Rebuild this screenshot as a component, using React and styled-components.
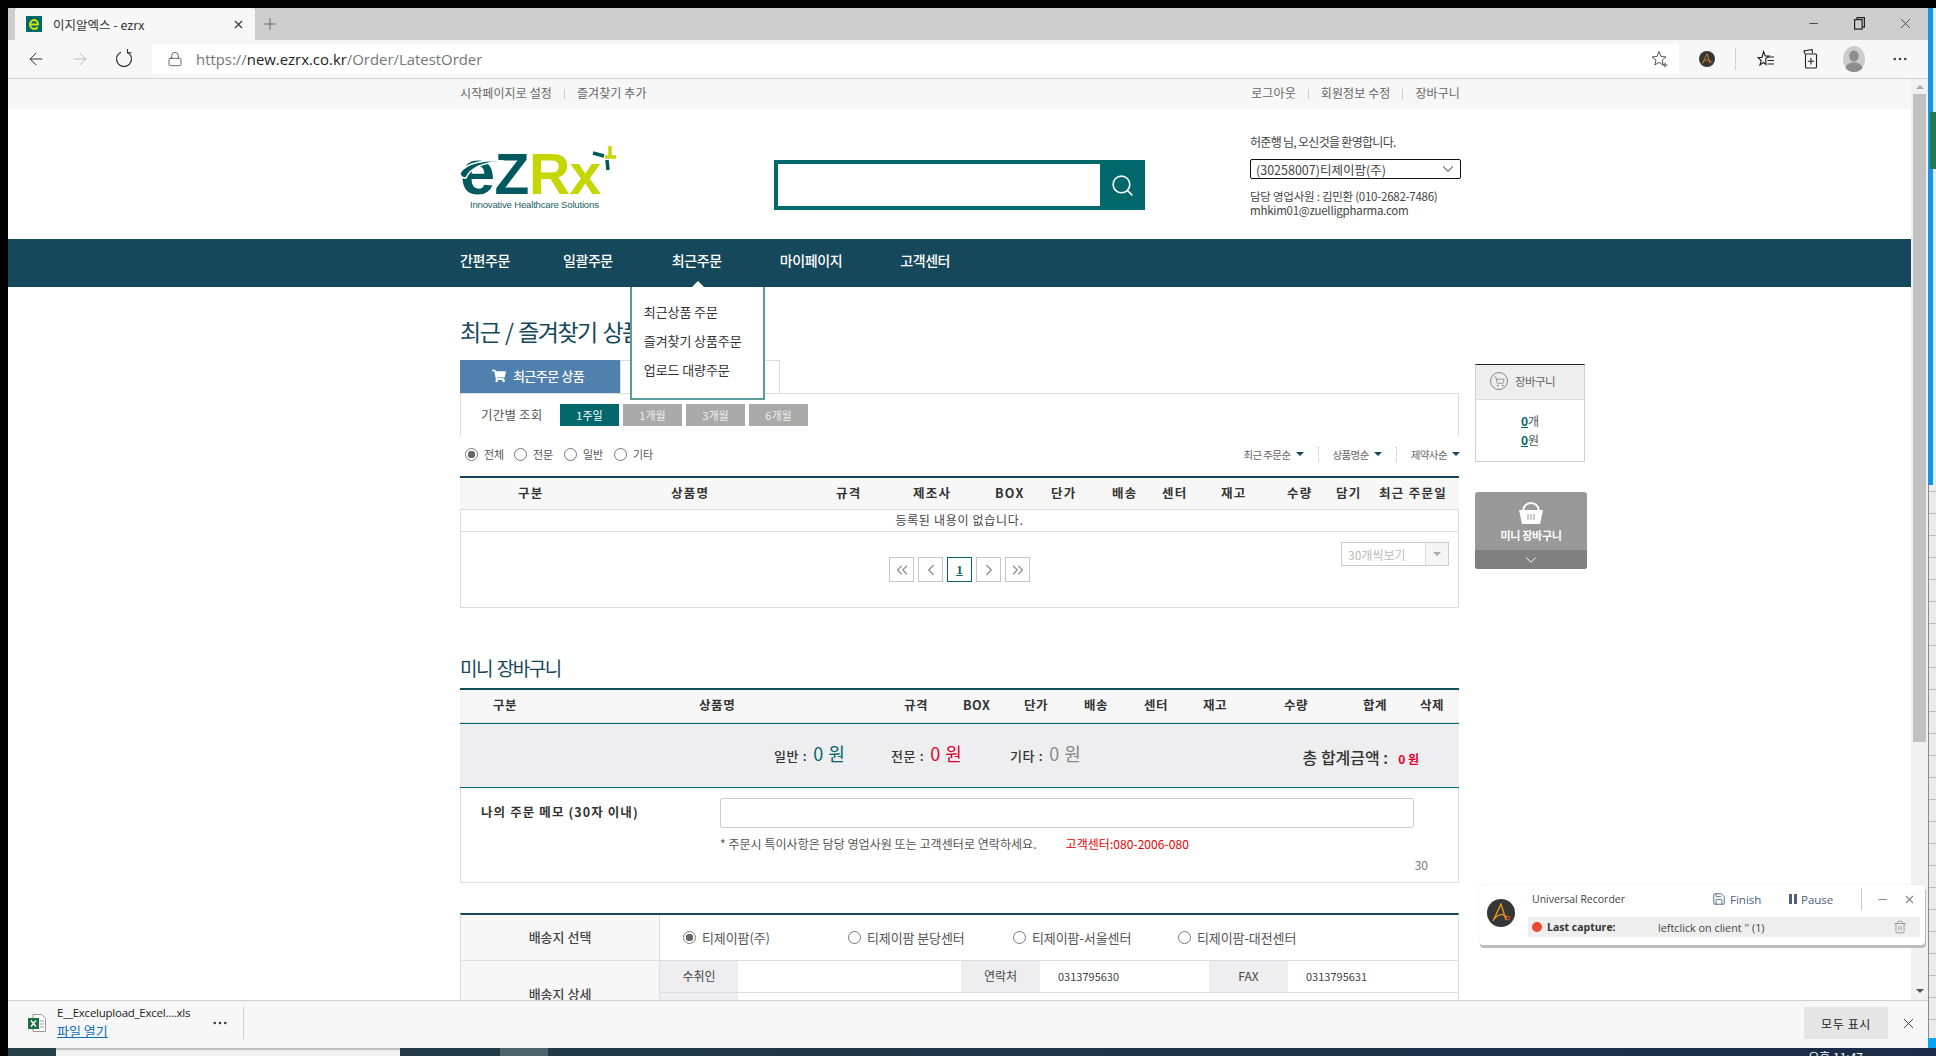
import React from 'react'
import styled, { createGlobalStyle } from 'styled-components'
import {
  ArrowLeft,
  ArrowRight,
  ChevronDown,
  ChevronLeft,
  ChevronRight,
  ChevronsLeft,
  ChevronsRight,
  Lock,
  Minus,
  MoreHorizontal,
  Plus,
  Save,
  Search,
  ShoppingCart,
  Trash2,
  X,
} from 'lucide-react'
import { FaShoppingCart } from 'react-icons/fa'

const KR = '"Noto Sans CJK KR", "Liberation Sans", sans-serif'
const UI = '"Open Sans", "Noto Sans CJK KR", sans-serif'
const TEAL = '#00686b'
const NAVY = '#15485a'
const LINE = '#dddddd'

const GlobalStyle = createGlobalStyle`
  html, body {
    margin: 0;
    padding: 0;
    background: #000;
    overflow: hidden;
  }
  * {
    box-sizing: border-box;
  }
`

const Screen = styled.div`
  width: 1936px;
  height: 1056px;
  display: flex;
  padding-top: 8px;
  padding-left: 8px;
  background: #000;
  overflow: hidden;
  font-family: ${KR};
`

const Browser = styled.div`
  width: 1920px;
  height: 1048px;
  display: flex;
  flex-direction: column;
  background: #fff;
`

const SideStrip = styled.div`
  width: 8px;
  height: 1048px;
  display: flex;
  flex-direction: column;
  background: repeating-linear-gradient(#ebebeb 0 21px, #b9b9b9 21px 22px);
`

const StripBlue = styled.div`
  height: 477px;
  flex: none;
  background: linear-gradient(to right, #1196e8 5px, #e9e9e9 5px);
  padding: 104px 0 0 2px;
`

const StripGreen = styled.div`
  height: 57px;
  background: #21794f;
`

const StripFill = styled.div`
  flex: 1;
  border-left: 1px solid #8a8a8a;
`

const StripCyan = styled.div`
  height: 10px;
  background: #0aa5f2;
`

const StripDark = styled.div`
  height: 8px;
  background: #1a2a48;
`

const TabStrip = styled.div`
  height: 32px;
  flex: none;
  display: flex;
  padding-left: 7px;
  background: #cdcdcd;
`

const Tab = styled.div`
  width: 240px;
  display: flex;
  align-items: center;
  padding: 0 10px 0 11px;
  background: #f7f7f7;
  border-radius: 3px 3px 0 0;
  font: 12.5px ${KR};
  color: #333;
`

const TabTitle = styled.span`
  margin-left: 11px;
  flex: 1;
`

const NewTab = styled.div`
  width: 30px;
  display: flex;
  align-items: center;
  justify-content: center;
  color: #444;
`

const WindowButtons = styled.div`
  margin-left: auto;
  display: flex;
`

const WindowButton = styled.div`
  width: 46px;
  height: 30px;
  display: flex;
  align-items: center;
  justify-content: center;
  color: #222;
`

const Toolbar = styled.div`
  height: 39px;
  flex: none;
  display: flex;
  align-items: center;
  padding: 0 6px;
  background: #f7f7f7;
  border-bottom: 1px solid #d2d2d2;
`

const ToolButton = styled.div`
  width: ${(props) => props.$width || 44}px;
  height: 30px;
  flex: none;
  display: flex;
  align-items: center;
  justify-content: center;
  color: ${(props) => (props.$faded ? '#bbb' : '#333')};
`

const AddressBar = styled.div`
  width: 1527px;
  height: 30px;
  flex: none;
  margin-left: 6px;
  display: flex;
  align-items: center;
  padding: 0 10px 0 15px;
  background: #fff;
  border-radius: 3px;
`

const Url = styled.div`
  margin-left: 13px;
  flex: 1;
  font: 14.9px ${UI};
  color: #777;
`

const UrlHost = styled.span`
  color: #222;
`

const ToolDivider = styled.div`
  width: 1px;
  height: 22px;
  flex: none;
  margin-right: 7px;
  background: #d0d0d0;
`

const Viewport = styled.div`
  flex: 1;
  min-height: 0;
  display: flex;
  position: relative;
  overflow: hidden;
`

const Page = styled.div`
  width: 1903px;
  flex: none;
`

const ScrollTrack = styled.div`
  width: 17px;
  flex: none;
  display: flex;
  flex-direction: column;
  align-items: center;
  padding-top: 6px;
  background: #f1f1f1;
`

const ScrollThumb = styled.div`
  width: 13px;
  height: 648px;
  margin-top: 5px;
  background: #c0c0c0;
`

const ScrollArrow = styled.div`
  width: 0;
  height: 0;
  border-left: 4px solid transparent;
  border-right: 4px solid transparent;
  border-${(props) => (props.$down ? 'top' : 'bottom')}: 4px solid ${(props) => (props.$down ? '#555' : '#a8a8a8')};
  margin-top: ${(props) => (props.$down ? 'auto' : 0)};
  margin-bottom: ${(props) => (props.$down ? '7px' : 0)};
`

const TopBar = styled.div`
  height: 30px;
  display: flex;
  align-items: center;
  padding: 0 451px 4px 452px;
  background: #f7f7f7;
  font-size: 12px;
  color: #666;
`

const TopLinks = styled.div`
  display: flex;
  align-items: center;
  margin-left: ${(props) => (props.$right ? 'auto' : 0)};
`

const TopLink = styled.span`
  letter-spacing: 0.1px;
  & + &::before {
    content: '';
    display: inline-block;
    width: 1px;
    height: 10px;
    margin: 0 12px;
    background: #ccc;
    vertical-align: -1px;
  }
`

const Header = styled.div`
  height: 130px;
  display: flex;
  align-items: flex-start;
  padding-left: 452px;
`

const Logo = styled.div`
  width: 157px;
  height: 65px;
  flex: none;
  margin-top: 36px;
  position: relative;
  font-family: 'Liberation Sans', sans-serif;
  font-weight: 700;
`

const LogoWord = styled.div`
  display: flex;
  align-items: baseline;
  height: 54px;
  padding-top: 2px;
  line-height: 50px;
  letter-spacing: -0.5px;
`

const LogoPart = styled.span`
  color: ${(props) => props.$color};
  font-size: ${(props) => props.$size || 57}px;
`

const LogoTag = styled.div`
  margin-left: 10px;
  font-size: 9.6px;
  font-weight: 400;
  line-height: 12px;
  letter-spacing: -0.2px;
  white-space: nowrap;
  color: #1d5f66;
`

const LogoArt = styled.svg`
  position: absolute;
  left: 0;
  top: 0;
`

const SearchBox = styled.div`
  width: 371px;
  height: 50px;
  flex: none;
  margin: 51px 0 0 157px;
  display: flex;
  border: 4px solid ${TEAL};
`

const SearchField = styled.div`
  flex: 1;
  background: #fff;
`

const SearchButton = styled.div`
  width: 41px;
  display: flex;
  align-items: center;
  justify-content: center;
  padding-left: 4px;
  background: ${TEAL};
  color: #fff;
`

const Account = styled.div`
  width: 211px;
  flex: none;
  margin: 25px 0 0 105px;
  font-size: 11.5px;
  color: #444;
`

const Greeting = styled.div`
  line-height: 16px;
  font-size: 12px;
  letter-spacing: -0.7px;
`

const ClientSelect = styled.div`
  height: 20px;
  margin: 9px 0 10px;
  display: flex;
  align-items: center;
  justify-content: space-between;
  padding: 0 3px 0 5px;
  border: 1px solid #111;
  border-radius: 2px;
  font-size: 12.5px;
  color: #444;
`

const Manager = styled.div`
  line-height: 14px;
  letter-spacing: -0.25px;
  white-space: nowrap;
`

const Nav = styled.div`
  height: 48px;
  display: flex;
  align-items: center;
  padding-left: 452px;
  background: ${NAVY};
`

const NavItem = styled.div`
  height: 48px;
  position: relative;
  display: flex;
  align-items: center;
  padding-bottom: 6px;
  margin-right: ${(props) => props.$gap || 0}px;
  font-size: 14px;
  font-weight: 500;
  letter-spacing: -0.4px;
  color: #fff;
`

const Dropdown = styled.div`
  position: absolute;
  left: -42px;
  top: 48px;
  z-index: 5;
  width: 135px;
  height: 113px;
  padding: 10px 0 0 12px;
  background: #fff;
  border: 2px solid #5a9c99;
  border-top: none;
  font-size: 13px;
  font-weight: 400;
  letter-spacing: -0.1px;
  color: #333;
  &::before {
    content: '';
    position: absolute;
    left: 60px;
    top: -6px;
    border-left: 6px solid transparent;
    border-right: 6px solid transparent;
    border-bottom: 6px solid #fff;
  }
`

const DropdownItem = styled.div`
  height: 29px;
  line-height: 29px;
`

const Body = styled.div`
  display: flex;
  align-items: flex-start;
  gap: 16px;
  padding: 28px 0 0 452px;
`

const Main = styled.div`
  width: 999px;
  flex: none;
`

const SectionTitle = styled.h2`
  margin: ${(props) => props.$top || 0}px 0 ${(props) => props.$bottom || 0}px;
  height: ${(props) => props.$height}px;
  line-height: ${(props) => props.$height}px;
  font-size: ${(props) => props.$size}px;
  font-weight: 400;
  letter-spacing: -1.5px;
  word-spacing: 2px;
  white-space: nowrap;
  color: ${NAVY};
`

const Tabs = styled.div`
  display: flex;
`

const PanelTab = styled.div`
  width: ${(props) => props.$width}px;
  height: 33px;
  display: flex;
  align-items: center;
  justify-content: center;
  gap: 7px;
  padding: 0 4px 3px 0;
  background: ${(props) => (props.$active ? '#5080ad' : '#fff')};
  border: 1px solid ${(props) => (props.$active ? '#5080ad' : LINE)};
  border-bottom: none;
  font-size: 13px;
  font-weight: 500;
  letter-spacing: -0.5px;
  color: #fff;
`

const FilterPanel = styled.div`
  height: 43px;
  display: flex;
  align-items: flex-start;
  padding: 10px 0 0 20px;
  border: 1px solid ${LINE};
  border-bottom: none;
`

const FilterLabel = styled.div`
  width: 79px;
  line-height: 22px;
  font-size: 12.5px;
  letter-spacing: 0.2px;
  color: #555;
`

const PeriodButton = styled.div`
  width: 59px;
  height: 22px;
  margin-right: 4px;
  text-align: center;
  line-height: 22px;
  font-size: 11px;
  color: ${(props) => (props.$active ? '#fff' : '#eee')};
  background: ${(props) => (props.$active ? TEAL : '#aaaaaa')};
`

const OptionRow = styled.div`
  height: 40px;
  display: flex;
  align-items: center;
  padding: 0 0 4px 5px;
  font-size: 11px;
  color: #555;
`

const RadioLabel = styled.label`
  display: flex;
  align-items: center;
  width: ${(props) => props.$width}px;
  flex: none;
  white-space: nowrap;
  font-size: ${(props) => props.$size || 11}px;
  letter-spacing: ${(props) => props.$spacing || 0}px;
`

const RadioDot = styled.input.attrs({ type: 'radio' })`
  appearance: none;
  width: 13px;
  height: 13px;
  margin: 0 6px 0 0;
  flex: none;
  border: 1px solid #777;
  border-radius: 50%;
  background: #fff;
  &:checked {
    background: radial-gradient(circle, #666 0 3.5px, #fff 4px);
  }
`

const SortLinks = styled.div`
  margin-left: auto;
  margin-right: -1px;
  display: flex;
  align-items: center;
  letter-spacing: -0.6px;
  font-size: 10.5px;
  color: #666;
`

const SortLink = styled.span`
  display: flex;
  align-items: center;
  gap: 5px;
  & + & {
    margin-left: 14px;
    padding-left: 14px;
    border-left: 1px dotted #bbb;
  }
  &::after {
    content: '';
    border-left: 4px solid transparent;
    border-right: 4px solid transparent;
    border-top: 4px solid ${NAVY};
  }
`

const HeadRow = styled.div`
  height: ${(props) => props.$height}px;
  display: grid;
  grid-template-columns: ${(props) => props.$columns};
  align-items: center;
  padding: 0 0 ${(props) => props.$lift || 2}px ${(props) => props.$indent}px;
  background: #f7f7f7;
  border-top: 2px solid ${(props) => props.$line};
  border-bottom: 1px solid ${LINE};
  font-size: 12.5px;
  font-weight: 700;
  color: #333;
`

const HeadCell = styled.span`
  white-space: nowrap;
  letter-spacing: ${(props) => (props.$wide ? '1.3px' : '0.6px')};
`

const EmptyRow = styled.div`
  height: 22px;
  display: flex;
  align-items: center;
  justify-content: center;
  padding-bottom: 2px;
  border: 1px solid ${LINE};
  border-width: 0 1px 1px;
  font-size: 12px;
  letter-spacing: 0.7px;
  color: #444;
`

const PagerBox = styled.div`
  height: 76px;
  display: flex;
  align-items: flex-start;
  padding: 10px 9px 0 428px;
  border: 1px solid ${LINE};
  border-top: none;
`

const Pager = styled.div`
  display: flex;
  gap: 4px;
  margin-top: 15px;
`

const PagerButton = styled.div`
  width: 25px;
  height: 25px;
  display: flex;
  align-items: center;
  justify-content: center;
  border: 1px solid ${(props) => (props.$active ? TEAL : '#c8c8c8')};
  font-family: 'Liberation Serif', serif;
  font-size: 13px;
  font-weight: 700;
  text-decoration: underline;
  color: ${(props) => (props.$active ? TEAL : '#8f8f8f')};
`

const PageSize = styled.div`
  width: 108px;
  height: 24px;
  margin-left: auto;
  display: flex;
  align-items: center;
  padding-left: 6px;
  border: 1px solid #ccc;
  font-size: 12px;
  color: #bbb;
`

const PageSizeLabel = styled.span`
  flex: 1;
`

const PageSizeArrow = styled.span`
  width: 23px;
  height: 22px;
  display: flex;
  align-items: center;
  justify-content: center;
  background: #f5f5f5;
  border-left: 1px solid #ddd;
  &::after {
    content: '';
    border-left: 4px solid transparent;
    border-right: 4px solid transparent;
    border-top: 4px solid #aaa;
  }
`

const SummaryBar = styled.div`
  height: 65px;
  display: flex;
  align-items: center;
  padding: 0 40px 0 314px;
  background: #eeeef0;
  border-top: 1px solid ${TEAL};
  border-bottom: 1px solid ${TEAL};
`

const SummaryItem = styled.div`
  width: ${(props) => props.$width}px;
  display: flex;
  align-items: baseline;
  gap: 6px;
  margin-top: -5px;
  font-size: 13px;
  font-weight: 500;
  letter-spacing: 0.6px;
  color: #333;
`

const SummaryValue = styled.span`
  font-size: 18px;
  font-weight: 400;
  color: ${(props) => props.$color};
`

const Total = styled.div`
  margin-left: auto;
  display: flex;
  align-items: baseline;
  gap: 10px;
  margin-top: 3px;
  font-size: 16px;
  font-weight: 500;
  color: #333;
`

const TotalValue = styled.span`
  font-size: 12px;
  font-weight: 700;
  color: #e00030;
`

const MemoBox = styled.div`
  height: 95px;
  display: flex;
  padding: 10px 44px 0 20px;
  border: 1px solid ${LINE};
  border-top: none;
`

const MemoLabel = styled.div`
  width: 239px;
  flex: none;
  padding-top: 4px;
  font-size: 12.5px;
  font-weight: 700;
  letter-spacing: 1.1px;
  white-space: nowrap;
  color: #333;
`

const MemoFields = styled.div`
  flex: 1;
  display: flex;
  flex-direction: column;
`

const MemoInput = styled.div`
  height: 30px;
  border: 1px solid #ccc;
  border-radius: 2px;
`

const MemoNote = styled.div`
  display: flex;
  gap: 29px;
  margin-top: 7px;
  font-size: 12px;
  letter-spacing: 0.05px;
  white-space: nowrap;
  color: #555;
`

const MemoHot = styled.span`
  color: #ee0000;
`

const MemoCount = styled.div`
  align-self: flex-end;
  margin: 4px -14px 0 0;
  font-size: 12px;
  color: #777;
`

const ShipTable = styled.div`
  margin-top: 30px;
  border: 1px solid ${LINE};
  border-top: 2px solid ${NAVY};
`

const ShipRow = styled.div`
  display: grid;
  grid-template-columns: 199px 1fr;
  & + & {
    border-top: 1px solid ${LINE};
  }
`

const ShipHead = styled.div`
  display: flex;
  align-items: center;
  justify-content: center;
  min-height: ${(props) => props.$height}px;
  padding-bottom: 2px;
  background: #f7f7f7;
  border-right: 1px solid ${LINE};
  font-size: 13px;
  font-weight: 500;
  color: #444;
`

const ShipOptions = styled.div`
  display: flex;
  align-items: center;
  padding-left: 23px;
  color: #555;
`

const DetailRow = styled.div`
  display: grid;
  grid-template-columns: 78px 223px 79px 169px 79px 1fr;
  height: 32px;
  border-bottom: 1px solid ${LINE};
`

const DetailLabel = styled.div`
  display: flex;
  align-items: center;
  justify-content: center;
  padding-bottom: 2px;
  background: #eeeef0;
  font-size: 12px;
  color: #444;
`

const DetailValue = styled.div`
  display: flex;
  align-items: center;
  padding: 0 0 2px 18px;
  font-size: 11px;
  color: #444;
`

const SideColumn = styled.div`
  width: 112px;
  flex: none;
  margin-top: 49px;
`

const SideCart = styled.div`
  width: 110px;
  height: 98px;
  border: 1px solid #d0d0d0;
  border-top: 1px solid #222;
`

const SideCartHead = styled.div`
  height: 35px;
  display: flex;
  align-items: center;
  gap: 7px;
  padding: 0 0 2px 14px;
  background: #eeeeee;
  border-bottom: 1px solid #dcdcdc;
  font-size: 11.5px;
  letter-spacing: -0.6px;
  color: #666;
`

const CartCircle = styled.span`
  width: 18px;
  height: 18px;
  display: flex;
  align-items: center;
  justify-content: center;
  border: 1px solid #888;
  border-radius: 50%;
  color: #777;
`

const SideCartBody = styled.div`
  padding-top: 11px;
`

const SideCartLine = styled.div`
  height: 19px;
  line-height: 19px;
  text-align: center;
  font-size: 12px;
  color: #555;
`

const CartCount = styled.span`
  text-decoration: underline;
  font-weight: 700;
  color: ${TEAL};
`

const MiniCartButton = styled.div`
  width: 112px;
  height: 77px;
  margin-top: 30px;
  display: flex;
  flex-direction: column;
  align-items: center;
  background: #999999;
  border-radius: 3px;
  overflow: hidden;
  font-size: 11px;
  font-weight: 700;
  letter-spacing: -0.3px;
  color: #fff;
`

const MiniCartIcon = styled.div`
  height: 35px;
  padding-top: 9px;
`

const MiniCartLabel = styled.div`
  height: 23px;
  line-height: 16px;
`

const MiniCartFoot = styled.div`
  align-self: stretch;
  flex: 1;
  display: flex;
  align-items: center;
  justify-content: center;
  background: #808080;
`

const Recorder = styled.div`
  position: absolute;
  right: 3px;
  top: 806px;
  z-index: 6;
  width: 446px;
  height: 60px;
  padding: 0 5px 0 8px;
  background: #fff;
  border-radius: 4px;
  box-shadow: 1px 3px 0 #bdbdbd, 0 0 2px #ddd;
  font: 10.8px ${UI};
  color: #444;
`

const RecorderTop = styled.div`
  height: 28px;
  margin-bottom: 4px;
  display: flex;
  align-items: center;
  padding-left: 45px;
`

const RecorderName = styled.span`
  width: 180px;
  flex: none;
  font-size: 10.5px;
`

const RecorderAction = styled.span`
  width: ${(props) => props.$width}px;
  flex: none;
  display: flex;
  align-items: center;
  gap: 4px;
  font-size: 11.5px;
  color: #4a6080;
`

const PauseBars = styled.span`
  width: 8px;
  height: 10px;
  flex: none;
  border-left: 3px solid #4a6080;
  border-right: 3px solid #4a6080;
`

const RecorderDivider = styled.span`
  width: 1px;
  height: 22px;
  flex: none;
  margin-right: 14px;
  background: #c8c8c8;
`

const RecorderGlyph = styled.span`
  display: flex;
  margin-right: 14px;
  color: #888;
`

const RecorderRow = styled.div`
  height: 20px;
  margin: 0 0 0 41px;
  display: flex;
  align-items: center;
  padding-left: 4px;
  background: #eeeeee;
`

const RedDot = styled.span`
  width: 10px;
  height: 10px;
  flex: none;
  margin-right: 5px;
  background: #e84a2f;
  border-radius: 50%;
`

const CaptureLabel = styled.strong`
  width: 111px;
  flex: none;
  font-weight: 700;
  font-size: 10.5px;
  color: #333;
`

const CaptureText = styled.span`
  flex: 1;
`

const RecorderBin = styled.span`
  display: flex;
  margin-right: 13px;
  color: #888;
`

const RecorderLogo = styled.span`
  position: absolute;
  left: 8px;
  top: 14px;
`

const DownloadBar = styled.div`
  height: 48px;
  flex: none;
  display: flex;
  align-items: center;
  padding: 0 0 3px 20px;
  background: #f7f7f7;
  border-top: 1px solid #cfcfcf;
`

const FileInfo = styled.div`
  width: 148px;
  flex: none;
  margin-left: 11px;
  padding-bottom: 2px;
  font: 11.5px ${UI};
  color: #222;
`

const FileName = styled.div`
  line-height: 18px;
  letter-spacing: -0.25px;
  white-space: nowrap;
`

const FileLink = styled.div`
  line-height: 18px;
  font-size: 13px;
  font-family: ${KR};
  text-decoration: underline;
  color: #0f6cbd;
`

const FileMore = styled.div`
  width: 30px;
  display: flex;
  justify-content: center;
  color: #333;
`

const BarDivider = styled.div`
  width: 1px;
  height: 32px;
  margin-left: 8px;
  background: #d0d0d0;
`

const ShowAll = styled.div`
  width: 84px;
  height: 32px;
  margin-left: auto;
  display: flex;
  align-items: center;
  justify-content: center;
  background: #e5e5e5;
  font-size: 12px;
  letter-spacing: 0.6px;
  color: #222;
`

const BarClose = styled.div`
  width: 40px;
  display: flex;
  justify-content: center;
  color: #222;
`

const Taskbar = styled.div`
  height: 8px;
  flex: none;
  display: flex;
  overflow: hidden;
  background: linear-gradient(to right, #253f47, #1c2c48);
`

const TaskItem = styled.div`
  width: ${(props) => props.$width}px;
  margin-left: ${(props) => props.$left}px;
  background: ${(props) => props.$color};
  border-top: ${(props) => (props.$line ? '2px solid #bcbcbc' : 'none')};
`

const Clock = styled.div`
  margin-left: auto;
  margin-right: 65px;
  font-size: 12px;
  line-height: 14px;
  padding-top: 2px;
  color: #fff;
`

const FIRST_COLUMNS = '153px 165px 77px 82px 56px 61px 50px 59px 66px 49px 43px 1fr'
const SECOND_COLUMNS = '206px 205px 59px 61px 60px 60px 59px 81px 79px 57px 1fr'

const FIRST_HEAD = ['구분', '상품명', '규격', '제조사', 'BOX', '단가', '배송', '센터', '재고', '수량', '담기', '최근 주문일']
const SECOND_HEAD = ['구분', '상품명', '규격', 'BOX', '단가', '배송', '센터', '재고', '수량', '합계', '삭제']
const NAV_ITEMS = [
  { label: '간편주문', gap: 53 },
  { label: '일괄주문', gap: 59 },
  { label: '최근주문', gap: 58, menu: ['최근상품 주문', '즐겨찾기 상품주문', '업로드 대량주문'] },
  { label: '마이페이지', gap: 58 },
  { label: '고객센터' },
]
const PERIODS = ['1주일', '1개월', '3개월', '6개월']
const KINDS = [
  { label: '전체', width: 49, checked: true },
  { label: '전문', width: 50 },
  { label: '일반', width: 50 },
  { label: '기타', width: 50 },
]
const SHIP_TO = [
  { label: '티제이팜(주)', checked: true },
  { label: '티제이팜 분당센터' },
  { label: '티제이팜-서울센터' },
  { label: '티제이팜-대전센터' },
]

const Favicon = () => (
  <svg width="16" height="16" viewBox="0 0 16 16">
    <rect width="16" height="16" fill="#00686b" />
    <path d="M4 8.500h8C12 5.500 10 4 8 4S4 6 4 8.500 6 13 8 13c1.500 0 3-.8 3.500-2" fill="none" stroke="#d4e000" strokeWidth="2" />
  </svg>
)

const BrandAvatar = ({ size }) => (
  <svg width={size} height={size} viewBox="0 0 28 28">
    <circle cx="14" cy="14" r="14" fill="#363636" />
    <path d="M6 22 14 5l5 16M7 20c4-5 9-6 13-2" fill="none" stroke="#f09a1a" strokeWidth="1.300" />
    <circle cx="21" cy="19" r="1.800" fill="none" stroke="#e8502a" strokeWidth="1" />
  </svg>
)

const StarPlus = () => (
  <svg width="18" height="18" viewBox="0 0 18 18" fill="none" stroke="#555" strokeWidth="1">
    <path d="M8 1.500 10 6.500l5 .4-3.800 3.200 1 4.900L8 12.300 3.800 15 5 10.100 1 6.900l5-.4z" />
    <path d="M14 12.500v5M11.500 15h5" />
  </svg>
)

const FavoritesIcon = () => (
  <svg width="18" height="18" viewBox="0 0 18 18" fill="none" stroke="#222" strokeWidth="1.100">
    <path d="M6.500 1.500 8.200 6H12L8.800 8.500V11l.2 3.500-2.500-2L3 15l1.200-4.500L1 7.500h4z" />
    <path d="M11 7h6M10.500 10.500h6.500M10.500 14h6.500" />
  </svg>
)

const CollectionsIcon = () => (
  <svg width="18" height="20" viewBox="0 0 18 20" fill="none" stroke="#222" strokeWidth="1.100">
    <path d="M4 5 3 2l8-1.500L11.500 4" />
    <rect x="4.500" y="5" width="11" height="14" rx="1" />
    <path d="M10 9v6.500M6.800 12.200h6.400" />
  </svg>
)

const ProfileIcon = () => (
  <svg width="22" height="26" viewBox="0 0 22 26">
    <ellipse cx="11" cy="13" rx="11" ry="13" fill="#cccccc" />
    <ellipse cx="11" cy="10" rx="4.800" ry="5.500" fill="#8d8d8d" />
    <path d="M2.500 22c1-4 4.500-5.500 8.500-5.500s7.500 1.500 8.500 5.500c-2 2.500-5 4-8.500 4s-6.500-1.500-8.500-4z" fill="#8d8d8d" />
  </svg>
)

const ReloadIcon = () => (
  <svg width="18" height="20" viewBox="0 0 18 20" fill="none" stroke="#333" strokeWidth="1.100">
    <path d="M6 3.200A7.500 7.500 0 1 0 12 3.200" />
    <path d="M12.500 0v3.800H16.500" />
  </svg>
)

const BasketIcon = () => (
  <svg width="26" height="24" viewBox="0 0 26 24" fill="none">
    <path d="M5 11C5 5.500 8.500 2 13 2s8 3.500 8 9" stroke="#fff" strokeWidth="2" />
    <path d="M1 9h24l-3 14H4z" fill="#fff" />
    <path d="M10 13v6M13 13v6M16 13v6" stroke="#999" strokeWidth="1" />
  </svg>
)

const ExcelIcon = () => (
  <svg width="18" height="18" viewBox="0 0 18 18">
    <path d="M5 .5h8.500l4 4v13H5z" fill="#fff" stroke="#999" />
    <path d="M12 7h4M12 10h4M12 13h4" stroke="#999" />
    <rect y="4" width="11" height="11" fill="#1f7145" />
    <path d="M3 6.500 8 12.500M8 6.500 3 12.500" stroke="#fff" strokeWidth="1.400" />
  </svg>
)

const App = () => (
  <>
    <GlobalStyle />
    <Screen>
      <Browser>
        <TabStrip>
          <Tab>
            <Favicon />
            <TabTitle>이지알엑스 - ezrx</TabTitle>
            <X size={13} strokeWidth={2} />
          </Tab>
          <NewTab>
            <Plus size={18} strokeWidth={1} />
          </NewTab>
          <WindowButtons>
            <WindowButton>
              <Minus size={13} strokeWidth={1.4} />
            </WindowButton>
            <WindowButton>
              <svg width="11" height="13" viewBox="0 0 11 13" fill="none" stroke="#222" strokeWidth="1.200">
                <rect x="0.600" y="2.600" width="7.500" height="9.500" />
                <path d="M3 2.500V.6h7.400v9.500H8" />
              </svg>
            </WindowButton>
            <WindowButton>
              <X size={17} strokeWidth={1} />
            </WindowButton>
          </WindowButtons>
        </TabStrip>

        <Toolbar>
          <ToolButton>
            <ArrowLeft size={20} strokeWidth={1.2} />
          </ToolButton>
          <ToolButton $faded>
            <ArrowRight size={20} strokeWidth={1.2} />
          </ToolButton>
          <ToolButton>
            <ReloadIcon />
          </ToolButton>
          <AddressBar>
            <Lock size={16} strokeWidth={1.2} color="#444" />
            <Url>
              https://<UrlHost>new.ezrx.co.kr</UrlHost>/Order/LatestOrder
            </Url>
            <StarPlus />
          </AddressBar>
          <ToolButton $width={56}>
            <BrandAvatar size={16} />
          </ToolButton>
          <ToolDivider />
          <ToolButton $width={45}>
            <FavoritesIcon />
          </ToolButton>
          <ToolButton $width={43}>
            <CollectionsIcon />
          </ToolButton>
          <ToolButton $width={45}>
            <ProfileIcon />
          </ToolButton>
          <ToolButton $width={47}>
            <MoreHorizontal size={18} strokeWidth={1.4} />
          </ToolButton>
        </Toolbar>

        <Viewport>
          <Page>
            <TopBar>
              <TopLinks>
                <TopLink>시작페이지로 설정</TopLink>
                <TopLink>즐겨찾기 추가</TopLink>
              </TopLinks>
              <TopLinks $right>
                <TopLink>로그아웃</TopLink>
                <TopLink>회원정보 수정</TopLink>
                <TopLink>장바구니</TopLink>
              </TopLinks>
            </TopBar>

            <Header>
              <Logo>
                <LogoWord>
                  <LogoPart $color="#00595f" $size={63}>e</LogoPart>
                  <LogoPart $color="#00595f">Z</LogoPart>
                  <LogoPart $color="#c5d600">Rx</LogoPart>
                </LogoWord>
                <LogoTag>Innovative Healthcare Solutions</LogoTag>
                <LogoArt width="157" height="65" viewBox="0 0 157 65" fill="none">
                  <path d="M0 28C5 18 26 14 44 16 28 17 11 21 6 33 2 33 0 31 0 28z" fill="#00595f" stroke="#fff" strokeWidth="1.500" />
                  <path d="M150 1v11M145 12h11" stroke="#c5d600" strokeWidth="3.500" />
                  <path d="M133 8l11 3M147 15l1 10" stroke="#00595f" strokeWidth="3.500" />
                </LogoArt>
              </Logo>
              <SearchBox>
                <SearchField />
                <SearchButton>
                  <Search size={25} strokeWidth={1.5} />
                </SearchButton>
              </SearchBox>
              <Account>
                <Greeting>허준행 님, 오신것을 환영합니다.</Greeting>
                <ClientSelect>
                  (30258007)티제이팜(주)
                  <ChevronDown size={18} color="#777" strokeWidth={1.5} />
                </ClientSelect>
                <Manager>담당 영업사원 : 김민환 (010-2682-7486)</Manager>
                <Manager>mhkim01@zuelligpharma.com</Manager>
              </Account>
            </Header>

            <Nav>
              {NAV_ITEMS.map((item) => (
                <NavItem key={item.label} $gap={item.gap}>
                  {item.label}
                  {item.menu && (
                    <Dropdown>
                      {item.menu.map((entry) => (
                        <DropdownItem key={entry}>{entry}</DropdownItem>
                      ))}
                    </Dropdown>
                  )}
                </NavItem>
              ))}
            </Nav>

            <Body>
              <Main>
                <SectionTitle $height={32} $size={23} $bottom={13}>
                  최근 / 즐겨찾기 상품
                </SectionTitle>
                <Tabs>
                  <PanelTab $width={160} $active>
                    <FaShoppingCart size={14} />
                    최근주문 상품
                  </PanelTab>
                  <PanelTab $width={160} />
                </Tabs>
                <FilterPanel>
                  <FilterLabel>기간별 조회</FilterLabel>
                  {PERIODS.map((period, index) => (
                    <PeriodButton key={period} $active={index === 0}>
                      {period}
                    </PeriodButton>
                  ))}
                </FilterPanel>
                <OptionRow>
                  {KINDS.map((kind) => (
                    <RadioLabel key={kind.label} $width={kind.width}>
                      <RadioDot name="kind" defaultChecked={kind.checked} />
                      {kind.label}
                    </RadioLabel>
                  ))}
                  <SortLinks>
                    <SortLink>최근 주문순</SortLink>
                    <SortLink>상품명순</SortLink>
                    <SortLink>제약사순</SortLink>
                  </SortLinks>
                </OptionRow>
                <HeadRow $height={34} $columns={FIRST_COLUMNS} $indent={58} $line={NAVY}>
                  {FIRST_HEAD.map((cell) => (
                    <HeadCell key={cell} $wide>
                      {cell}
                    </HeadCell>
                  ))}
                </HeadRow>
                <EmptyRow>등록된 내용이 없습니다.</EmptyRow>
                <PagerBox>
                  <Pager>
                    <PagerButton>
                      <ChevronsLeft size={18} strokeWidth={1.7} />
                    </PagerButton>
                    <PagerButton>
                      <ChevronLeft size={18} strokeWidth={1.7} />
                    </PagerButton>
                    <PagerButton $active>1</PagerButton>
                    <PagerButton>
                      <ChevronRight size={18} strokeWidth={1.7} />
                    </PagerButton>
                    <PagerButton>
                      <ChevronsRight size={18} strokeWidth={1.7} />
                    </PagerButton>
                  </Pager>
                  <PageSize>
                    <PageSizeLabel>30개씩보기</PageSizeLabel>
                    <PageSizeArrow />
                  </PageSize>
                </PagerBox>

                <SectionTitle $height={28} $size={19} $top={46} $bottom={6}>
                  미니 장바구니
                </SectionTitle>
                <HeadRow $height={35} $columns={SECOND_COLUMNS} $indent={33} $line="#15505a" $lift={3}>
                  {SECOND_HEAD.map((cell) => (
                    <HeadCell key={cell}>{cell}</HeadCell>
                  ))}
                </HeadRow>
                <SummaryBar>
                  <SummaryItem $width={117}>
                    일반 : <SummaryValue $color={TEAL}>0 원</SummaryValue>
                  </SummaryItem>
                  <SummaryItem $width={119}>
                    전문 : <SummaryValue $color="#e00030">0 원</SummaryValue>
                  </SummaryItem>
                  <SummaryItem $width={100}>
                    기타 : <SummaryValue $color="#888">0 원</SummaryValue>
                  </SummaryItem>
                  <Total>
                    총 합계금액 : <TotalValue>0 원</TotalValue>
                  </Total>
                </SummaryBar>
                <MemoBox>
                  <MemoLabel>나의 주문 메모 (30자 이내)</MemoLabel>
                  <MemoFields>
                    <MemoInput />
                    <MemoNote>
                      <span>* 주문시 특이사항은 담당 영업사원 또는 고객센터로 연락하세요.</span>
                      <MemoHot>고객센터:080-2006-080</MemoHot>
                    </MemoNote>
                    <MemoCount>30</MemoCount>
                  </MemoFields>
                </MemoBox>

                <ShipTable>
                  <ShipRow>
                    <ShipHead $height={45}>배송지 선택</ShipHead>
                    <ShipOptions>
                      {SHIP_TO.map((place) => (
                        <RadioLabel key={place.label} $width={165} $size={13} $spacing={-0.1}>
                          <RadioDot name="ship" defaultChecked={place.checked} />
                          {place.label}
                        </RadioLabel>
                      ))}
                    </ShipOptions>
                  </ShipRow>
                  <ShipRow>
                    <ShipHead $height={66}>배송지 상세</ShipHead>
                    <div>
                      <DetailRow>
                        <DetailLabel>수취인</DetailLabel>
                        <DetailValue />
                        <DetailLabel>연락처</DetailLabel>
                        <DetailValue>0313795630</DetailValue>
                        <DetailLabel>FAX</DetailLabel>
                        <DetailValue>0313795631</DetailValue>
                      </DetailRow>
                      <DetailRow>
                        <DetailLabel />
                      </DetailRow>
                    </div>
                  </ShipRow>
                </ShipTable>
              </Main>

              <SideColumn>
                <SideCart>
                  <SideCartHead>
                    <CartCircle>
                      <ShoppingCart size={11} strokeWidth={1.5} />
                    </CartCircle>
                    장바구니
                  </SideCartHead>
                  <SideCartBody>
                    <SideCartLine>
                      <CartCount>0</CartCount>개
                    </SideCartLine>
                    <SideCartLine>
                      <CartCount>0</CartCount>원
                    </SideCartLine>
                  </SideCartBody>
                </SideCart>
                <MiniCartButton>
                  <MiniCartIcon>
                    <BasketIcon />
                  </MiniCartIcon>
                  <MiniCartLabel>미니 장바구니</MiniCartLabel>
                  <MiniCartFoot>
                    <ChevronDown size={18} strokeWidth={1.3} />
                  </MiniCartFoot>
                </MiniCartButton>
              </SideColumn>
            </Body>
          </Page>

          <ScrollTrack>
            <ScrollArrow />
            <ScrollThumb />
            <ScrollArrow $down />
          </ScrollTrack>

          <Recorder>
            <RecorderLogo>
              <BrandAvatar size={28} />
            </RecorderLogo>
            <RecorderTop>
              <RecorderName>Universal Recorder</RecorderName>
              <RecorderAction $width={77}>
                <Save size={14} strokeWidth={1.5} />
                Finish
              </RecorderAction>
              <RecorderAction $width={72}>
                <PauseBars />
                Pause
              </RecorderAction>
              <RecorderDivider />
              <RecorderGlyph>
                <Minus size={13} />
              </RecorderGlyph>
              <RecorderGlyph>
                <X size={13} />
              </RecorderGlyph>
            </RecorderTop>
            <RecorderRow>
              <RedDot />
              <CaptureLabel>Last capture:</CaptureLabel>
              <CaptureText>leftclick on client '' (1)</CaptureText>
              <RecorderBin>
                <Trash2 size={14} strokeWidth={1.3} />
              </RecorderBin>
            </RecorderRow>
          </Recorder>
        </Viewport>

        <DownloadBar>
          <ExcelIcon />
          <FileInfo>
            <FileName>E__Excelupload_Excel....xls</FileName>
            <FileLink>파일 열기</FileLink>
          </FileInfo>
          <FileMore>
            <MoreHorizontal size={18} strokeWidth={1.5} />
          </FileMore>
          <BarDivider />
          <ShowAll>모두 표시</ShowAll>
          <BarClose>
            <X size={17} strokeWidth={1.2} />
          </BarClose>
        </DownloadBar>

        <Taskbar>
          <TaskItem $left={48} $width={344} $color="#f0f0f0" $line />
          <TaskItem $left={100} $width={48} $color="#4f636a" />
          <Clock>오후 11:47</Clock>
        </Taskbar>
      </Browser>

      <SideStrip>
        <StripBlue>
          <StripGreen />
        </StripBlue>
        <StripFill />
        <StripCyan />
        <StripDark />
      </SideStrip>
    </Screen>
  </>
)

export default App
